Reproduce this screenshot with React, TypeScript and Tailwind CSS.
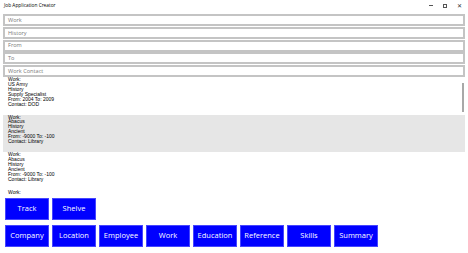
const fields = ["Work", "History", "From", "To", "Work Contact"];

const entries = [
  ["Work:", "US Army", "History", "Supply Specialist", "From: 2004 To: 2009", "Contact: DOD"],
  ["Work:", "Abacus", "History", "Ancient", "From: -9000 To: -100", "Contact: Library"],
  ["Work:", "Abacus", "History", "Ancient", "From: -9000 To: -100", "Contact: Library"],
  ["Work:"],
];

const topButtons = ["Track", "Shelve"];
const bottomButtons = ["Company", "Location", "Employee", "Work", "Education", "Reference", "Skills", "Summary"];

const Btn = ({ label }: { label: string }) => (
  <button className="w-[44px] h-[22px] bg-[#0000ff] border border-[#4646ff] text-white text-[7.5px] leading-none font-['Open_Sans',sans-serif]">
    {label}
  </button>
);

export default function App() {
  return (
    <div className="w-[468px] h-[253px] bg-white overflow-hidden flex flex-col font-['Liberation_Sans',sans-serif]">
      {/* title bar */}
      <div className="h-[11px] flex items-center justify-between pl-[4px] pr-[6px]">
        <span className="text-[4.8px] text-black font-['Open_Sans',sans-serif]">Job Application Creator</span>
        <div className="flex items-center gap-[10px] text-[6px] text-[#333]">
          <span className="block w-[4px] h-[0.6px] bg-[#555]"></span>
          <span className="block w-[4px] h-[4px] border-[0.6px] border-[#555]"></span>
          <span className="leading-none">✕</span>
        </div>
      </div>

      {/* inputs */}
      <div className="flex flex-col gap-[0.75px] px-[3px] mt-[3px]">
        {fields.map((f) => (
          <div key={f} className="h-[12px] border-2 border-[#c4c4c4] flex items-center pl-[3px]">
            <span className="text-[5.6px] text-[#7a7a7a] font-['Open_Sans',sans-serif]">{f}</span>
          </div>
        ))}
      </div>

      {/* list */}
      <div className="relative h-[117px] mx-[3px] overflow-hidden">
        {entries.map((lines, i) => (
          <div key={i} className={`h-[37.5px] pl-[5px] ${i === 1 ? "bg-[#e6e6e6]" : ""}`}>
            {lines.map((l, j) => (
              <div key={j} className="text-[5px] leading-[4.9px] text-black whitespace-nowrap">{l}</div>
            ))}
          </div>
        ))}
        <div className="absolute right-[1px] top-[6px] w-[2px] h-[29px] bg-[#a8a8a8]"></div>
      </div>

      {/* buttons */}
      <div className="flex flex-col gap-[5px] px-[5px] mt-[4px]">
        <div className="flex gap-[3px]">
          {topButtons.map((b) => <Btn key={b} label={b} />)}
        </div>
        <div className="flex gap-[3px]">
          {bottomButtons.map((b) => <Btn key={b} label={b} />)}
        </div>
      </div>
    </div>
  );
}
